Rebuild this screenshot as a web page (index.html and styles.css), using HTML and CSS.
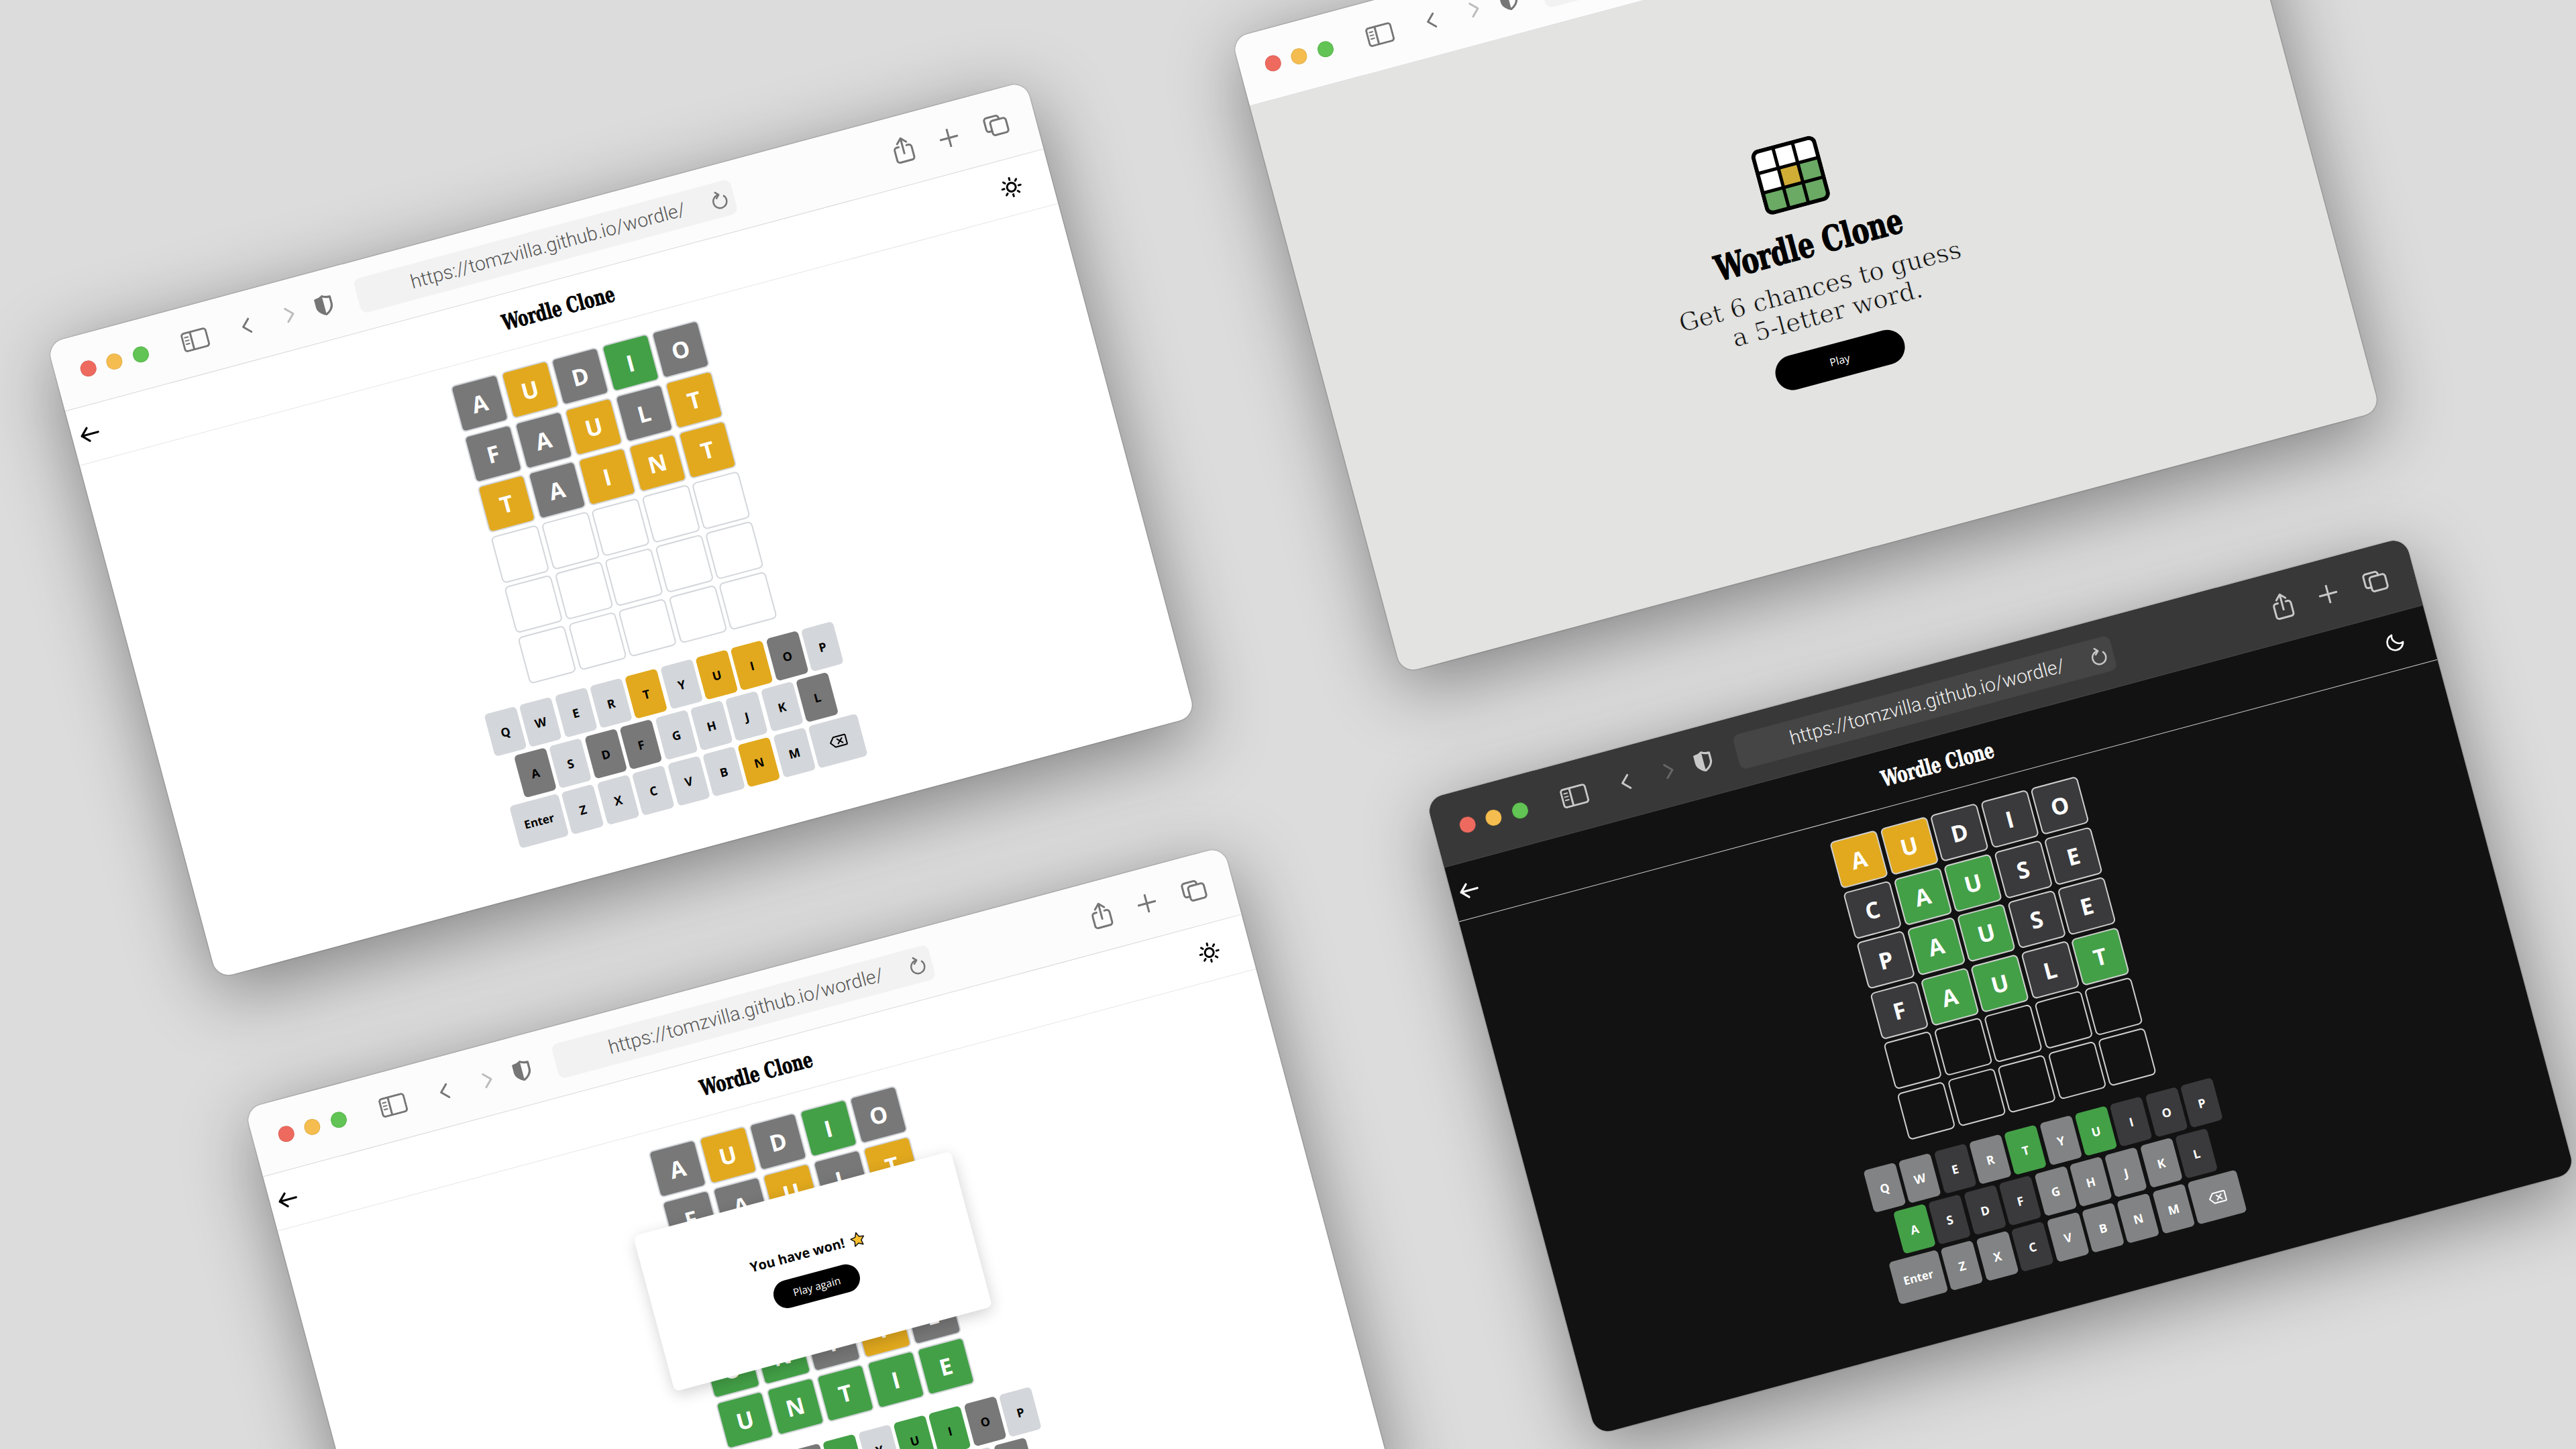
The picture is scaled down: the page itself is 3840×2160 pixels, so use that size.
FILE: index.html
```html
<!DOCTYPE html>
<html lang="en">
<head>
    <meta charset="UTF-8">
    <title>Wordle Clone</title>
    <link rel="stylesheet" href="styles.css">
</head>
<body>
    <svg class="defs" width="0" height="0">
        <symbol id="i-sidebar" viewBox="0 0 40 30"><rect x="1.5" y="1.5" width="37" height="27" rx="4"/><path d="M15 2V28"/><path class="thin" d="M5.5 8H10.5M5.5 13H10.5M5.5 18H10.5"/></symbol>
        <symbol id="i-back" viewBox="0 0 16 24"><path d="M13 2L3 12L13 22"/></symbol>
        <symbol id="i-forward" viewBox="0 0 16 24"><path d="M3 2L13 12L3 22"/></symbol>
        <symbol id="i-shield" viewBox="0 0 26 30"><path d="M13 2C10 4 6 5 2.5 5V15C2.5 21 8 26 13 28C18 26 23.5 21 23.5 15V5C20 5 16 4 13 2Z"/><path class="solid" d="M13 2C10 4 6 5 2.5 5V15C2.5 21 8 26 13 28Z"/></symbol>
        <symbol id="i-reload" viewBox="0 0 24 30"><path d="M19.500 11.500A10 10 0 1 1 12 8"/><path d="M8 3.500L12.500 8L8 12.500"/></symbol>
        <symbol id="i-share" viewBox="0 0 30 40"><path d="M9 15H6A4 4 0 0 0 2 19V34A4 4 0 0 0 6 38H24A4 4 0 0 0 28 34V19A4 4 0 0 0 24 15H21"/><path d="M15 26V3M8 10L15 3L22 10"/></symbol>
        <symbol id="i-plus" viewBox="0 0 28 28"><path d="M14 1V27M1 14H27"/></symbol>
        <symbol id="i-tabs" viewBox="0 0 36 32"><rect x="10" y="8" width="24" height="22" rx="4"/><path d="M10 23H6A4 4 0 0 1 2 19V6A4 4 0 0 1 6 2H20A4 4 0 0 1 24 6V8"/></symbol>
        <symbol id="i-arrow" viewBox="0 0 28 24"><path d="M26 12H3M12 3L3 12L12 21"/></symbol>
        <symbol id="i-sun" viewBox="0 0 32 32"><circle cx="16" cy="16" r="6.500"/><path d="M16 2V5M16 27V30M2 16H5M27 16H30M6.100 6.100L8.200 8.200M23.800 23.800L25.900 25.900M6.100 25.900L8.200 23.800M23.800 8.200L25.900 6.100"/></symbol>
        <symbol id="i-moon" viewBox="0 0 32 32"><path d="M13 3A13.500 13.500 0 1 0 29 19C20 23 9 13 13 3Z"/></symbol>
        <symbol id="i-del" viewBox="0 0 28 20"><path d="M2 10L8 2.500H25A1 1 0 0 1 26 3.500V16.500A1 1 0 0 1 25 17.500H8Z"/><path d="M13 6.500L20 13.500M20 6.500L13 13.500"/></symbol>
    </svg>

    <!-- light, mid game -->
    <section class="window win-game">
        <div class="toolbar">
            <div class="lights"><i class="red"></i><i class="yellow"></i><i class="green"></i></div>
            <svg class="ic sidebar"><use href="#i-sidebar"/></svg>
            <svg class="ic back"><use href="#i-back"/></svg>
            <svg class="ic forward"><use href="#i-forward"/></svg>
            <svg class="ic shield"><use href="#i-shield"/></svg>
            <div class="urlbar"><span>https://tomzvilla.github.io/wordle/</span><svg class="ic reload"><use href="#i-reload"/></svg></div>
            <svg class="ic share"><use href="#i-share"/></svg>
            <svg class="ic plus"><use href="#i-plus"/></svg>
            <svg class="ic tabs"><use href="#i-tabs"/></svg>
        </div>
        <header class="apphead">
            <svg class="ic arrow"><use href="#i-arrow"/></svg>
            <h1>Wordle Clone</h1>
            <svg class="ic mode"><use href="#i-sun"/></svg>
        </header>
        <div class="board">
            <div class="tile gray">A</div><div class="tile gold">U</div><div class="tile gray">D</div><div class="tile hit">I</div><div class="tile gray">O</div>
            <div class="tile gray">F</div><div class="tile gray">A</div><div class="tile gold">U</div><div class="tile gray">L</div><div class="tile gold">T</div>
            <div class="tile gold">T</div><div class="tile gray">A</div><div class="tile gold">I</div><div class="tile gold">N</div><div class="tile gold">T</div>
            <div class="tile"></div><div class="tile"></div><div class="tile"></div><div class="tile"></div><div class="tile"></div>
            <div class="tile"></div><div class="tile"></div><div class="tile"></div><div class="tile"></div><div class="tile"></div>
            <div class="tile"></div><div class="tile"></div><div class="tile"></div><div class="tile"></div><div class="tile"></div>
        </div>
        <div class="keyboard">
            <div class="keyrow"><b class="key">Q</b><b class="key">W</b><b class="key">E</b><b class="key">R</b><b class="key gold">T</b><b class="key">Y</b><b class="key gold">U</b><b class="key gold">I</b><b class="key gray">O</b><b class="key">P</b></div>
            <div class="keyrow"><b class="key gray">A</b><b class="key">S</b><b class="key gray">D</b><b class="key gray">F</b><b class="key">G</b><b class="key">H</b><b class="key">J</b><b class="key">K</b><b class="key gray">L</b></div>
            <div class="keyrow"><b class="key wide">Enter</b><b class="key">Z</b><b class="key">X</b><b class="key">C</b><b class="key">V</b><b class="key">B</b><b class="key gold">N</b><b class="key">M</b><b class="key wide"><svg class="ic del"><use href="#i-del"/></svg></b></div>
        </div>
    </section>

    <!-- landing -->
    <section class="window win-home">
        <div class="toolbar">
            <div class="lights"><i class="red"></i><i class="yellow"></i><i class="green"></i></div>
            <svg class="ic sidebar"><use href="#i-sidebar"/></svg>
            <svg class="ic back"><use href="#i-back"/></svg>
            <svg class="ic forward"><use href="#i-forward"/></svg>
            <svg class="ic shield"><use href="#i-shield"/></svg>
            <div class="urlbar"><span>https://tomzvilla.github.io/wordle/</span><svg class="ic reload"><use href="#i-reload"/></svg></div>
            <svg class="ic share"><use href="#i-share"/></svg>
            <svg class="ic plus"><use href="#i-plus"/></svg>
            <svg class="ic tabs"><use href="#i-tabs"/></svg>
        </div>
        <div class="home">
            <svg class="logo" viewBox="0 0 100 100">
                <rect class="cell-white" x="3" y="3" width="94" height="94" rx="9"/>
                <rect class="cell-gold" x="35" y="35" width="30" height="30"/>
                <rect class="cell-green" x="65" y="35" width="32" height="30"/>
                <path class="cell-green" d="M3 65H97V88A9 9 0 0 1 88 97H12A9 9 0 0 1 3 88Z"/>
                <path class="logo-lines" d="M35 3V97M65 3V97M3 35H97M3 65H97"/>
                <rect class="logo-frame" x="3" y="3" width="94" height="94" rx="9"/>
            </svg>
            <h1>Wordle Clone</h1>
            <p>Get 6 chances to guess<br>a 5-letter word.</p>
            <button class="pill play">Play</button>
        </div>
    </section>

    <!-- light, won -->
    <section class="window win-won">
        <div class="toolbar">
            <div class="lights"><i class="red"></i><i class="yellow"></i><i class="green"></i></div>
            <svg class="ic sidebar"><use href="#i-sidebar"/></svg>
            <svg class="ic back"><use href="#i-back"/></svg>
            <svg class="ic forward"><use href="#i-forward"/></svg>
            <svg class="ic shield"><use href="#i-shield"/></svg>
            <div class="urlbar"><span>https://tomzvilla.github.io/wordle/</span><svg class="ic reload"><use href="#i-reload"/></svg></div>
            <svg class="ic share"><use href="#i-share"/></svg>
            <svg class="ic plus"><use href="#i-plus"/></svg>
            <svg class="ic tabs"><use href="#i-tabs"/></svg>
        </div>
        <header class="apphead">
            <svg class="ic arrow"><use href="#i-arrow"/></svg>
            <h1>Wordle Clone</h1>
            <svg class="ic mode"><use href="#i-sun"/></svg>
        </header>
        <div class="board">
            <div class="tile gray">A</div><div class="tile gold">U</div><div class="tile gray">D</div><div class="tile hit">I</div><div class="tile gray">O</div>
            <div class="tile gray">F</div><div class="tile gray">A</div><div class="tile gold">U</div><div class="tile gray">L</div><div class="tile gold">T</div>
            <div class="tile gold">T</div><div class="tile gray">A</div><div class="tile gold">I</div><div class="tile gold">N</div><div class="tile gold">T</div>
            <div class="tile gray">C</div><div class="tile gray">A</div><div class="tile gold">U</div><div class="tile gray">S</div><div class="tile gold">E</div>
            <div class="tile hit">U</div><div class="tile hit">N</div><div class="tile gray">I</div><div class="tile gold">T</div><div class="tile gray">E</div>
            <div class="tile hit">U</div><div class="tile hit">N</div><div class="tile hit">T</div><div class="tile hit">I</div><div class="tile hit">E</div>
        </div>
        <div class="keyboard">
            <div class="keyrow"><b class="key">Q</b><b class="key">W</b><b class="key hit">E</b><b class="key gray">R</b><b class="key hit">T</b><b class="key">Y</b><b class="key hit">U</b><b class="key hit">I</b><b class="key gray">O</b><b class="key">P</b></div>
            <div class="keyrow"><b class="key gray">A</b><b class="key">S</b><b class="key gray">D</b><b class="key gray">F</b><b class="key">G</b><b class="key">H</b><b class="key">J</b><b class="key">K</b><b class="key gray">L</b></div>
        </div>
        <div class="popup">
            <div class="popup-text">You have won!<svg class="star" viewBox="0 0 24 24"><path d="M12 2L15 8.500L22 9.500L17 14.500L18.200 21.500L12 18L5.800 21.500L7 14.500L2 9.500L9 8.500Z"/></svg></div>
            <button class="pill again">Play again</button>
        </div>
    </section>

    <!-- dark -->
    <section class="window win-dark">
        <div class="toolbar">
            <div class="lights"><i class="red"></i><i class="yellow"></i><i class="green"></i></div>
            <svg class="ic sidebar"><use href="#i-sidebar"/></svg>
            <svg class="ic back"><use href="#i-back"/></svg>
            <svg class="ic forward"><use href="#i-forward"/></svg>
            <svg class="ic shield"><use href="#i-shield"/></svg>
            <div class="urlbar"><span>https://tomzvilla.github.io/wordle/</span><svg class="ic reload"><use href="#i-reload"/></svg></div>
            <svg class="ic share"><use href="#i-share"/></svg>
            <svg class="ic plus"><use href="#i-plus"/></svg>
            <svg class="ic tabs"><use href="#i-tabs"/></svg>
        </div>
        <header class="apphead">
            <svg class="ic arrow"><use href="#i-arrow"/></svg>
            <h1>Wordle Clone</h1>
            <svg class="ic mode moon"><use href="#i-moon"/></svg>
        </header>
        <div class="board">
            <div class="tile gold">A</div><div class="tile gold">U</div><div class="tile gray">D</div><div class="tile gray">I</div><div class="tile gray">O</div>
            <div class="tile gray">C</div><div class="tile hit">A</div><div class="tile hit">U</div><div class="tile gray">S</div><div class="tile gray">E</div>
            <div class="tile gray">P</div><div class="tile hit">A</div><div class="tile hit">U</div><div class="tile gray">S</div><div class="tile gray">E</div>
            <div class="tile gray">F</div><div class="tile hit">A</div><div class="tile hit">U</div><div class="tile gray">L</div><div class="tile hit">T</div>
            <div class="tile"></div><div class="tile"></div><div class="tile"></div><div class="tile"></div><div class="tile"></div>
            <div class="tile"></div><div class="tile"></div><div class="tile"></div><div class="tile"></div><div class="tile"></div>
        </div>
        <div class="keyboard">
            <div class="keyrow"><b class="key">Q</b><b class="key">W</b><b class="key gray">E</b><b class="key">R</b><b class="key hit">T</b><b class="key">Y</b><b class="key hit">U</b><b class="key gray">I</b><b class="key gray">O</b><b class="key gray">P</b></div>
            <div class="keyrow"><b class="key hit">A</b><b class="key gray">S</b><b class="key gray">D</b><b class="key gray">F</b><b class="key">G</b><b class="key">H</b><b class="key">J</b><b class="key">K</b><b class="key gray">L</b></div>
            <div class="keyrow"><b class="key wide">Enter</b><b class="key">Z</b><b class="key">X</b><b class="key gray">C</b><b class="key">V</b><b class="key">B</b><b class="key">N</b><b class="key">M</b><b class="key wide"><svg class="ic del"><use href="#i-del"/></svg></b></div>
        </div>
    </section>
</body>
</html>
```

FILE: styles.css
```css
html, body {
    margin: 0;
    width: 3840px;
    height: 2160px;
    overflow: hidden;
    background: #dcdcdc;
}
.defs {
    position: absolute;
}

/* windows lie on the canvas, all turned the same way */
.window {
    --bar: #fcfcfc;
    --bar-line: #d9d9d9;
    --url: #f2f2f2;
    --url-text: #555;
    --bar-icon: #767676;
    --bar-icon-off: #bcbcbc;
    --page: #fff;
    --head-line: #e6e6e6;
    --text: #000;
    --tile-line: #d3d6da;
    --key: #d3d6da;
    --key-text: #000;
    --off: #787878;
    position: absolute;
    width: 1510px;
    height: 980px;
    border-radius: 24px;
    overflow: hidden;
    background: var(--page);
    color: var(--text);
    font-family: "Open Sans", sans-serif;
    transform: rotate(-15deg);
    transform-origin: 0 0;
    box-shadow: 0 0 2px rgba(0,0,0,.55), 0 26px 110px rgba(0,0,0,.42);
}
.win-game { left: 70px; top: 512px; }
.win-home { left: 1836px; top: 57px; }
.win-won { left: 365px; top: 1653px; }
.win-dark {
    left: 2126px;
    top: 1192px;
    --bar: #383838;
    --bar-line: #444;
    --url: #454545;
    --url-text: #f0f0f0;
    --bar-icon: #c8c8c8;
    --bar-icon-off: #666;
    --page: #121212;
    --head-line: #d0d0d0;
    --text: #fff;
    --tile-line: #cfcfcf;
    --key: #818384;
    --key-text: #fff;
    --off: #3a3a3c;
}

.toolbar {
    height: 105px;
    box-sizing: border-box;
    padding: 0 41px 0 38px;
    display: flex;
    align-items: center;
    background: var(--bar);
    border-bottom: 1.500px solid var(--bar-line);
}
.lights {
    display: flex;
    gap: 16.300px;
}
.lights i {
    display: block;
    width: 24px;
    height: 24px;
    border-radius: 50%;
    box-sizing: border-box;
    border: 1px solid rgba(0,0,0,.08);
}
.lights .red { background: #ee6a5f; }
.lights .yellow { background: #f5bd4f; }
.lights .green { background: #61c454; }

.ic {
    fill: none;
    stroke: var(--bar-icon);
    stroke-width: 3;
    stroke-linecap: round;
    stroke-linejoin: round;
    flex: none;
}
symbol .thin {
    stroke-width: 2;
}
symbol .solid {
    fill: var(--bar-icon);
    stroke: none;
}
.sidebar { width: 40px; height: 30px; margin-left: 52px; }
.back { width: 16px; height: 24px; margin-left: 51px; }
.forward { width: 16px; height: 24px; margin-left: 51px; stroke: var(--bar-icon-off); }
.shield { width: 28px; height: 32px; margin-left: 31px; }
.urlbar {
    width: 581px;
    height: 53px;
    margin-left: 37px;
    box-sizing: border-box;
    padding: 0 10px 0 83px;
    display: flex;
    align-items: center;
    justify-content: space-between;
    border-radius: 10px;
    background: var(--url);
    color: var(--url-text);
    font: 300 28.500px Roboto, sans-serif;
}
.reload { width: 24px; height: 30px; stroke-width: 2.500; }
.share { width: 30px; height: 40px; margin-left: auto; margin-top: -2px; }
.plus { width: 28px; height: 28px; margin-left: 41px; }
.tabs { width: 36px; height: 32px; margin-left: 41px; }

.apphead {
    height: 84px;
    box-sizing: border-box;
    display: grid;
    grid-template-columns: 1fr auto 1fr;
    align-items: center;
    padding: 0 45px 0 35px;
    border-bottom: 1px solid var(--head-line);
}
.apphead h1, .home h1 {
    margin: 0;
    font-family: "DejaVu Serif Condensed", "DejaVu Serif", serif;
    font-weight: 700;
}
.apphead h1 {
    font-size: 32px;
    line-height: 1;
    -webkit-text-stroke: .8px currentColor;
    transform: scaleX(.8);
}
.arrow {
    width: 31px;
    height: 26px;
    margin-left: -24px;
    stroke: var(--text);
}
.mode {
    width: 32px;
    height: 32px;
    justify-self: end;
    stroke: var(--text);
}
.mode.moon {
    width: 28px;
    height: 28px;
    margin-right: -5px;
}

.board {
    margin-top: 28px;
    display: grid;
    grid-template-columns: repeat(5, 72px);
    grid-auto-rows: 72px;
    gap: 5.500px;
    justify-content: center;
}
.tile {
    box-sizing: border-box;
    border: 2px solid var(--tile-line);
    border-radius: 7px;
    display: flex;
    align-items: center;
    justify-content: center;
    font-size: 34px;
    font-weight: 700;
    color: #fff;
}
.tile.gray { background: var(--off); }
.tile.gold { background: #e2a91e; }
.tile.hit { background: #43a047; }

.keyboard {
    margin-top: 26.500px;
    display: flex;
    flex-direction: column;
    align-items: center;
    gap: 6px;
}
.keyrow {
    display: flex;
    gap: 5.400px;
}
.key {
    width: 49px;
    height: 65px;
    border-radius: 6px;
    background: var(--key);
    color: var(--key-text);
    display: flex;
    align-items: center;
    justify-content: center;
    font-size: 18px;
    font-weight: 700;
}
.key.wide { width: 75px; font-size: 17px; }
.key.gray { background: var(--off); color: #fff; }
.key.gold { background: #e2a91e; color: #000; }
.key.hit { background: #43a047; color: #fff; }
.win-game .key.gray, .win-won .key.gray, .win-won .key.hit { color: #000; }
.del { width: 28px; height: 20px; stroke: var(--key-text); stroke-width: 2; }

.win-home {
    background: #e3e3e1;
}
.home {
    display: flex;
    flex-direction: column;
    align-items: center;
    padding: 258px 7px 0 0;
}
.logo {
    width: 100px;
    height: 100px;
}
.cell-white { fill: #fff; }
.cell-gold { fill: #d0ae35; }
.cell-green { fill: #6aaa64; }
.logo-lines, .logo-frame { fill: none; stroke: #000; }
.logo-lines { stroke-width: 5; }
.logo-frame { stroke-width: 6; }
.home h1 {
    margin-top: 26.500px;
    font-size: 52px;
    line-height: 60px;
    -webkit-text-stroke: 1.400px currentColor;
    transform: scaleX(.82);
}
.home p {
    margin: 14px 0 0;
    text-align: center;
    font: 400 37px/42.700px "DejaVu Serif", serif;
    color: #111;
    -webkit-text-stroke: .7px #e3e3e1;
}
.pill {
    border: 0;
    padding: 0;
    border-radius: 30px;
    background: #000;
    color: #fff;
    font-family: "Open Sans", sans-serif;
}
.play {
    width: 198px;
    height: 52px;
    margin-top: 23px;
    font-size: 16px;
}

.popup {
    position: absolute;
    left: 510px;
    top: 333px;
    width: 490px;
    height: 240px;
    box-sizing: border-box;
    border-radius: 8px;
    background: #fff;
    box-shadow: 0 6px 22px rgba(0,0,0,.18);
    display: flex;
    flex-direction: column;
    align-items: center;
    justify-content: center;
    gap: 17px;
}
.popup-text {
    display: flex;
    align-items: center;
    gap: 8px;
    font-size: 20px;
    font-weight: 700;
    line-height: 28px;
}
.star {
    width: 24px;
    height: 24px;
    fill: #fbc02d;
    stroke: #111;
    stroke-width: 1.500;
    stroke-linejoin: round;
}
.again {
    width: 132px;
    height: 42px;
    font-size: 15.500px;
}
```
